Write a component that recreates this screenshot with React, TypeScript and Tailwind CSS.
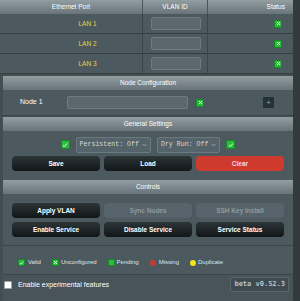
import React from "react";

// VLAN manager panel — router add-on page, dark slate theme

const hdr =
  "h-[14px] flex items-center justify-center bg-gradient-to-b from-[#939ea2] to-[#68747a] text-white text-[6.5px]";

function GreenX({ size = "w-[8px] h-[8px]" }: { size?: string }) {
  return (
    <span
      className={`${size} inline-flex items-center justify-center rounded-[1px] bg-[#2cbb3c] border border-[#168a26]`}
    >
      <svg viewBox="0 0 8 8" className="w-[5px] h-[5px]">
        <path d="M1.5 1.5 L6.5 6.5 M6.5 1.5 L1.5 6.5" stroke="#e9ffe9" strokeWidth="1.4" />
      </svg>
    </span>
  );
}

function GreenCheck({ size = "w-[9px] h-[9px]" }: { size?: string }) {
  return (
    <span
      className={`${size} inline-flex items-center justify-center rounded-[1px] bg-[#2cbb3c] border border-[#168a26]`}
    >
      <svg viewBox="0 0 8 8" className="w-[6px] h-[6px]">
        <path d="M1.2 4.2 L3.2 6 L6.8 1.8" stroke="#f2fff2" strokeWidth="1.3" fill="none" />
      </svg>
    </span>
  );
}

function Btn({ label, kind = "dark" }: { label: string; kind?: "dark" | "off" | "red" }) {
  const cls =
    kind === "red"
      ? "bg-[#cf3a2f] text-[#f7d9d4]"
      : kind === "off"
        ? "bg-[#56636a] text-[#8e9a9f]"
        : "bg-gradient-to-b from-[#2c3538] to-[#121719] text-white";
  return (
    <div
      className={`flex-1 h-[15px] rounded-[4px] flex items-center justify-center text-[6.5px] font-bold ${cls}`}
    >
      {label}
    </div>
  );
}

function Select({ label }: { label: string }) {
  return (
    <div className="h-[16px] px-[3px] flex items-center gap-[3px] bg-[#55636a] border border-[#6c797e] rounded-[2px] text-[#d4dadc] text-[6.6px] font-['Liberation_Mono',monospace]">
      <span>{label}</span>
      <svg viewBox="0 0 8 6" className="w-[5px] h-[4px]">
        <path d="M1 1.5 L4 4.5 L7 1.5" stroke="#c9d0d3" strokeWidth="1" fill="none" />
      </svg>
    </div>
  );
}

export default function App() {
  const lans = ["LAN 1", "LAN 2", "LAN 3"];

  return (
    <div className="w-[300px] h-[301px] overflow-hidden bg-[#323a3d] font-['Liberation_Sans',Arial,sans-serif]">
      <div className="w-[293px] h-[301px] bg-[#434e53] flex flex-col">
        {/* ── Port table ── */}
        <div className="flex flex-col bg-[#4c595e]">
          <div className="h-[14px] flex bg-gradient-to-b from-[#939ea2] to-[#68747a] text-white text-[6.5px]">
            <div className="w-[143px] flex items-center justify-center border-r border-[#4a5559]">
              Ethernet Port
            </div>
            <div className="w-[65px] flex items-center justify-center border-r border-[#4a5559]">
              VLAN ID
            </div>
            <div className="flex-1 flex items-center justify-end pr-[8px]">Status</div>
          </div>
          {lans.map((l) => (
            <div key={l} className="h-[20px] flex border-b border-[#353f42]">
              <div className="w-[143px] flex items-center justify-center pl-[33px] border-r border-[#3c4649] text-[#e6d246] text-[6.5px]">
                {l}
              </div>
              <div className="w-[65px] flex items-center pl-[8px] border-r border-[#3c4649]">
                <div className="w-[50px] h-[13px] rounded-[2px] bg-[#5a676c] border border-[#6e7b80]" />
              </div>
              <div className="flex-1 flex items-center justify-end pr-[11px]">
                <GreenX />
              </div>
            </div>
          ))}
        </div>

        {/* ── Node Configuration ── */}
        <div className="mt-[2px] ml-[3px] flex flex-col bg-[#4c595e]">
          <div className={hdr}>Node Configuration</div>
          <div className="h-[26px] flex items-center border-b border-[#3c4649]">
            <span className="w-[64px] pl-[17px] text-white text-[7px]">Node 1</span>
            <div className="w-[121px] h-[13px] rounded-[2px] bg-[#5a676c] border border-[#6e7b80]" />
            <span className="ml-[8px] flex">
              <GreenX />
            </span>
            <span className="ml-auto mr-[19px] w-[11px] h-[11px] bg-[#263239] flex items-center justify-center text-[#9aa6ab] text-[8px] leading-none">
              +
            </span>
          </div>
        </div>

        {/* ── General Settings ── */}
        <div className="mt-[1px] ml-[3px] flex flex-col bg-[#4c595e]">
          <div className={hdr}>General Settings</div>
          <div className="h-[25px] pt-[2px] flex items-center justify-center gap-[6px]">
            <GreenCheck />
            <Select label="Persistent: Off" />
            <Select label="Dry Run: Off" />
            <GreenCheck />
          </div>
          <div className="flex gap-[4px] px-[9px] pb-[9px]">
            <Btn label="Save" />
            <Btn label="Load" />
            <Btn label="Clear" kind="red" />
          </div>
        </div>

        {/* ── Controls ── */}
        <div className="ml-[3px] flex flex-col bg-[#4c595e]">
          <div className={hdr}>Controls</div>
          <div className="flex flex-col gap-[4px] px-[9px] pt-[9px] pb-[8px] border-b border-[#3c4649]">
            <div className="flex gap-[4px]">
              <Btn label="Apply VLAN" />
              <Btn label="Sync Nodes" kind="off" />
              <Btn label="SSH Key Install" kind="off" />
            </div>
            <div className="flex gap-[4px]">
              <Btn label="Enable Service" />
              <Btn label="Disable Service" />
              <Btn label="Service Status" />
            </div>
          </div>
        </div>

        {/* ── Legend ── */}
        <div className="ml-[3px] h-[29px] pt-[5px] flex items-center pl-[15px] gap-[11px] bg-[#4c595e] text-[#dfe6e8] text-[6px] border-b border-[#3c4649]">
          <span className="flex items-center gap-[3px]">
            <GreenCheck size="w-[7px] h-[7px]" />
            Valid
          </span>
          <span className="flex items-center gap-[2px]">
            <GreenX size="w-[7px] h-[7px]" />
            Unconfigured
          </span>
          <span className="flex items-center gap-[2px]">
            <span className="w-[7px] h-[7px] rounded-[1px] bg-[#2cbb3c] border border-[#168a26]" />
            Pending
          </span>
          <span className="flex items-center gap-[3px]">
            <span className="w-[6px] h-[6px] rounded-full bg-[#c83a32]" />
            Missing
          </span>
          <span className="flex items-center gap-[2px]">
            <span className="w-[6px] h-[6px] rounded-full bg-[#f1e21c]" />
            Duplicate
          </span>
        </div>

        {/* ── Footer ── */}
        <div className="flex-1 ml-[3px] flex items-start pt-[2px] bg-[#485459] pl-[1px]">
          <span className="mt-[4px] w-[8px] h-[8px] bg-white rounded-[1px] border border-[#9aa4a8]" />
          <span className="mt-[4px] ml-[6px] text-white text-[7px] leading-[8px]">
            Enable experimental features
          </span>
          <span className="ml-auto mr-[4px] h-[15px] px-[3px] flex items-center bg-[#3e4a50] border border-[#5a686e] rounded-[2px] text-[#b7c3c8] text-[7px] font-bold font-['DejaVu_Sans_Mono',monospace]">
            beta v0.52.3
          </span>
        </div>
      </div>
    </div>
  );
}
